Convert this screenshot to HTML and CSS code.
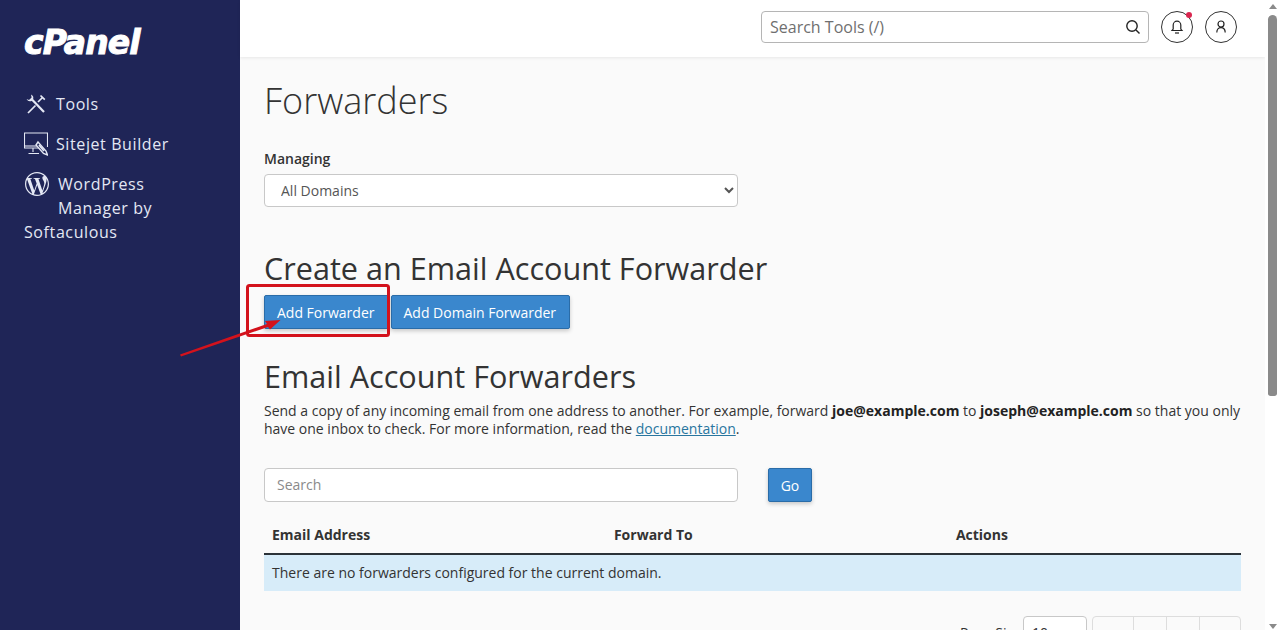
FILE: index.html
```html
<!DOCTYPE html>
<html>
	<head>
		<meta charset="UTF-8"/>
		<title>Forwarders - cPanel</title>
		<link rel="stylesheet" href="styles.css">
	</head>
	<body>
		<div class="app">
			<nav class="sidebar">
				<div class="logo">cPanel</div>
				<a class="nav-item" href="#">
					<svg class="nav-icon" width="24" height="24" viewBox="0 0 24 24" fill="none" stroke="#e4e8f4" stroke-width="1.7">
						<path d="M4 21 L11.5 13.5"/>
						<path d="M14 10 L18.5 5.5 M16.5 3.5 L20.8 7.6"/>
						<path d="M8 7.5 L20 20" stroke-width="2.2"/>
						<path d="M7 2.6 A4 4 0 0 1 9 7.6 L7.6 9 A4 4 0 0 1 2.6 7 L5 8 L7.6 5.4 Z" fill="#e4e8f4" stroke="none"/>
					</svg>
					<span>Tools</span>
				</a>
				<a class="nav-item" href="#">
					<svg class="nav-icon" width="24" height="24" viewBox="0 0 24 24" fill="none" stroke="#e4e8f4" stroke-width="1.1">
						<path d="M17 16 H0.5 V1 H23.5 V15"/>
						<path d="M0.5 14 H15"/>
						<path d="M9 16 V20 M4.5 21.5 H15"/>
						<path d="M14 10 L22 19 L23.5 23 L19.5 21.5 L12 13 Z" fill="#1f2557" stroke-width="1.4"/>
						<path d="M15 13 L20 19" stroke-width="1.8"/>
					</svg>
					<span>Sitejet Builder</span>
				</a>
				<a class="nav-item nav-item-wrap" href="#">
					<svg class="nav-icon nav-icon-wp" width="24" height="24" viewBox="0 0 24 24" fill="#e4e8f4">
						<path d="M21.469 6.825c.84 1.537 1.318 3.3 1.318 5.175 0 3.979-2.156 7.456-5.363 9.325l3.295-9.527c.615-1.54.82-2.771.82-3.864 0-.405-.026-.78-.07-1.11m-7.981.105c.647-.03 1.232-.105 1.232-.105.582-.075.514-.93-.067-.899 0 0-1.755.135-2.88.135-1.064 0-2.85-.15-2.85-.15-.585-.03-.661.855-.075.885 0 0 .54.061 1.125.09l1.68 4.605-2.37 7.08L5.354 6.9c.649-.03 1.234-.1 1.234-.1.585-.075.516-.93-.065-.896 0 0-1.746.138-2.874.138-.2 0-.438-.008-.69-.015C4.911 3.15 8.235 1.215 12 1.215c2.809 0 5.365 1.072 7.286 2.833-.046-.003-.091-.009-.141-.009-1.06 0-1.812.923-1.812 1.914 0 .89.513 1.643 1.06 2.531.411.72.89 1.643.89 2.977 0 .915-.354 1.994-.821 3.479l-1.075 3.585-3.9-11.61.001.014zM12 22.784c-1.059 0-2.081-.153-3.048-.437l3.237-9.406 3.315 9.087c.024.053.05.101.078.149-1.12.393-2.325.609-3.582.609M1.211 12c0-1.564.336-3.05.935-4.39L7.29 21.709C3.694 19.96 1.212 16.271 1.211 12M12 0C5.385 0 0 5.385 0 12s5.385 12 12 12 12-5.385 12-12S18.615 0 12 0"/>
					</svg>
					<span>WordPress Manager by Softaculous</span>
				</a>
			</nav>

			<div class="main">
				<header class="topbar">
					<div class="tool-search">
						<input type="text" placeholder="Search Tools (/)"/>
						<svg width="16" height="16" viewBox="0 0 16 16" fill="none" stroke="#222" stroke-width="1.4">
							<circle cx="7" cy="7" r="5.2"/>
							<path d="M11 11 L14.5 14.5"/>
						</svg>
					</div>
					<button class="round-btn" type="button" title="Notifications">
						<svg width="16" height="16" viewBox="0 0 16 16" fill="none" stroke="#222" stroke-width="1.2">
							<path d="M3 11.5 H13 L11.8 10 V6 A3.8 3.8 0 0 0 4.2 6 V10 Z"/>
							<path d="M6 14 H10"/>
						</svg>
						<span class="dot"></span>
					</button>
					<button class="round-btn" type="button" title="Account">
						<svg width="16" height="16" viewBox="0 0 16 16" fill="none" stroke="#222" stroke-width="1.2">
							<circle cx="8" cy="5" r="3"/>
							<path d="M3.8 13.5 C3.8 10.2 5.6 8.6 8 8.6 C10.4 8.6 12.2 10.2 12.2 13.5"/>
						</svg>
					</button>
				</header>

				<div class="content">
					<h1>Forwarders</h1>

					<label class="field-label" for="managing">Managing</label>
					<select class="field" id="managing">
						<option>All Domains</option>
					</select>

					<h2 class="create-title">Create an Email Account Forwarder</h2>
					<div class="btn-row">
						<button class="btn" type="button">Add Forwarder</button>
						<button class="btn" type="button">Add Domain Forwarder</button>
					</div>

					<h2 class="list-title">Email Account Forwarders</h2>
					<p class="intro">Send a copy of any incoming email from one address to another. For example, forward <b>joe@example.com</b> to <b>joseph@example.com</b> so that you only have one inbox to check. For more information, read the <a href="#">documentation</a>.</p>

					<div class="search-row">
						<input class="field search-input" type="text" placeholder="Search"/>
						<button class="btn btn-go" type="button">Go</button>
					</div>

					<table class="list">
						<thead>
							<tr>
								<th class="col-wide">Email Address</th>
								<th class="col-wide">Forward To</th>
								<th>Actions</th>
							</tr>
						</thead>
						<tbody>
							<tr>
								<td colspan="3">There are no forwarders configured for the current domain.</td>
							</tr>
						</tbody>
					</table>

					<div class="pager">
						<span class="pager-label">Page Size</span>
						<span class="pager-size">10</span>
						<span class="pager-btns">
							<span>&laquo;</span><span>&lsaquo;</span><span>&rsaquo;</span><span>&raquo;</span>
						</span>
					</div>
				</div>
			</div>

			<div class="scrollbar">
				<div class="scroll-up"></div>
				<div class="scroll-thumb"></div>
				<div class="scroll-down"></div>
			</div>
		</div>

		<!-- red annotation drawn over the screenshot -->
		<svg class="markup" width="1279" height="630" viewBox="0 0 1279 630" fill="none">
			<rect x="247.5" y="285.5" width="141" height="50" rx="2" stroke="#d3121c" stroke-width="3"/>
			<path d="M180 354.5 L181 356.5 L268 327 L270 329.5 L280.5 320 L265 321 L267 324 Z" fill="#d3121c"/>
		</svg>
	</body>
</html>
```

FILE: styles.css
```css
html, body {
	margin: 0;
	padding: 0;
	height: 100%;
	overflow: hidden;
	font-family: "Open Sans", sans-serif;
	font-size: 14px;
	color: #333;
	background: #fff;
}

.app {
	display: flex;
	height: 630px;
	overflow: hidden;
}

.sidebar {
	width: 240px;
	flex: none;
	box-sizing: border-box;
	padding: 26px 24px 0 24px;
	background: #1f2557;
	color: #e4e8f4;
}

.logo {
	font-family: "DejaVu Sans", sans-serif;
	font-weight: bold;
	font-style: italic;
	font-size: 33px;
	line-height: 34px;
	letter-spacing: -0.9px;
	color: #fff;
	-webkit-text-stroke: 1px #fff;
	margin-bottom: 32px;
}

.nav-item {
	display: flex;
	align-items: center;
	gap: 8px;
	min-height: 24px;
	margin-bottom: 16px;
	font-size: 16px;
	line-height: 24px;
	letter-spacing: 0.6px;
	color: #e4e8f4;
	text-decoration: none;
}

.nav-icon {
	flex: none;
}

/* the icon floats so the last line of the label runs back under it */
.nav-item-wrap {
	display: block;
}

.nav-icon-wp {
	float: left;
	margin: 0 9px 4px 1px;
}

.nav-item-wrap span {
	display: block;
}

.main {
	flex: 1;
	min-width: 0;
	background: #fafafa;
}

.topbar {
	display: flex;
	align-items: center;
	justify-content: flex-end;
	gap: 12px;
	height: 57px;
	box-sizing: border-box;
	padding: 0 28px 3px 0;
	background: #fff;
	box-shadow: 0 1px 3px rgba(0,0,0,0.08);
}

.tool-search {
	display: flex;
	align-items: center;
	width: 388px;
	height: 32px;
	box-sizing: border-box;
	padding: 0 7px 0 8px;
	border: 1px solid #b5b5b5;
	border-radius: 4px;
	background: #fff;
}

.tool-search input {
	flex: 1;
	min-width: 0;
	border: none;
	outline: none;
	padding: 0;
	font-family: "Open Sans", sans-serif;
	font-size: 16px;
	background: transparent;
}

.tool-search input::placeholder {
	color: #6f6f6f;
	opacity: 1;
}

.round-btn {
	position: relative;
	display: flex;
	align-items: center;
	justify-content: center;
	width: 32px;
	height: 32px;
	padding: 0;
	border: 1px solid #333;
	border-radius: 50%;
	background: #fff;
}

.dot {
	position: absolute;
	top: 0;
	right: 0;
	width: 6px;
	height: 6px;
	border-radius: 50%;
	background: #d9264f;
}

.content {
	padding: 0 24px;
}

h1 {
	margin: 0;
	padding-top: 20px;
	font-size: 36px;
	line-height: 48px;
	font-weight: 300;
	color: #333;
}

h2 {
	margin: 0;
	font-size: 30.6px;
	line-height: 40px;
	font-weight: 400;
	color: #333;
}

.field-label {
	display: block;
	margin-top: 24px;
	margin-bottom: 6px;
	line-height: 19px;
	font-weight: 600;
}

.field {
	display: block;
	width: 474px;
	height: 33px;
	box-sizing: border-box;
	border: 1px solid #c8c8c8;
	border-radius: 4px;
	background: #fff;
	font-family: "Open Sans", sans-serif;
	font-size: 14px;
	color: #555;
	outline: none;
}

select.field {
	padding: 0 12px;
}

.create-title {
	margin-top: 41px;
}

.btn-row {
	display: flex;
	gap: 2px;
	margin-top: 7px;
}

.btn {
	height: 34px;
	padding: 0 13px 0 12px;
	border: 1px solid #2a6ca8;
	border-radius: 2px;
	background: #3a87cd;
	color: #fff;
	font-family: "Open Sans", sans-serif;
	font-size: 14px;
	box-shadow: 0 2px 4px rgba(0,0,0,0.2);
}

.list-title {
	margin-top: 27px;
}

.intro {
	margin: 6px 0 0 0;
	line-height: 18px;
	color: #333;
}

.intro b {
	font-weight: 700;
	color: #222;
}

.intro a {
	color: #29769f;
}

.search-row {
	display: flex;
	gap: 30px;
	margin-top: 30px;
}

.search-input {
	height: 34px;
	padding: 0 12px 2px 12px;
}

.search-input::placeholder {
	color: #8a8a8a;
	opacity: 1;
}

.btn-go {
	width: 44px;
	padding: 0;
}

.list {
	width: 100%;
	margin-top: 15px;
	border-collapse: collapse;
	table-layout: fixed;
}

.list .col-wide {
	width: 35%;
}

.list th {
	height: 37px;
	box-sizing: border-box;
	padding: 0 8px 1px 8px;
	border-bottom: 2px solid #2b3238;
	text-align: left;
	font-weight: 700;
}

.list td {
	height: 37px;
	box-sizing: border-box;
	padding: 0 8px 1px 8px;
	background: #d7ecf9;
	color: #333;
}

.pager {
	display: flex;
	justify-content: flex-end;
	align-items: flex-start;
	gap: 5px;
	margin-top: 25px;
}

.pager-label {
	margin: 7px -3px 0 0;
	line-height: 20px;
}

.pager-size {
	width: 64px;
	height: 34px;
	box-sizing: border-box;
	padding: 5px 8px;
	line-height: 22px;
	border: 1px solid #c8c8c8;
	border-radius: 4px;
	background: #fff;
}

.pager-btns {
	display: flex;
	height: 34px;
	box-sizing: border-box;
	border: 1px solid #ddd;
	border-radius: 4px;
	color: #aaa;
}

.pager-btns span {
	width: 32px;
	text-align: center;
	font-size: 18px;
	line-height: 30px;
	border-left: 1px solid #ddd;
}

.pager-btns span:first-child {
	width: 40px;
	border-left: none;
}

.pager-btns span:last-child {
	width: 40px;
}

.scrollbar {
	display: flex;
	flex-direction: column;
	align-items: flex-end;
	width: 14px;
	flex: none;
	background: #fff;
	padding: 4px 2px 0 0;
	box-sizing: border-box;
}

.scroll-up, .scroll-down {
	flex: none;
	width: 0;
	height: 0;
	border-left: 4.5px solid transparent;
	border-right: 4.5px solid transparent;
}

.scroll-up {
	border-bottom: 5px solid #8a8a8a;
	margin-bottom: 6px;
}

.scroll-thumb {
	flex: none;
	width: 9px;
	height: 381px;
	border-radius: 5px 5px 3px 3px;
	background: #8a8a8a;
}

.scroll-down {
	border-top: 5px solid #8a8a8a;
	margin-top: 228px;
}

.markup {
	position: absolute;
	left: 0;
	top: 0;
	pointer-events: none;
}
```
